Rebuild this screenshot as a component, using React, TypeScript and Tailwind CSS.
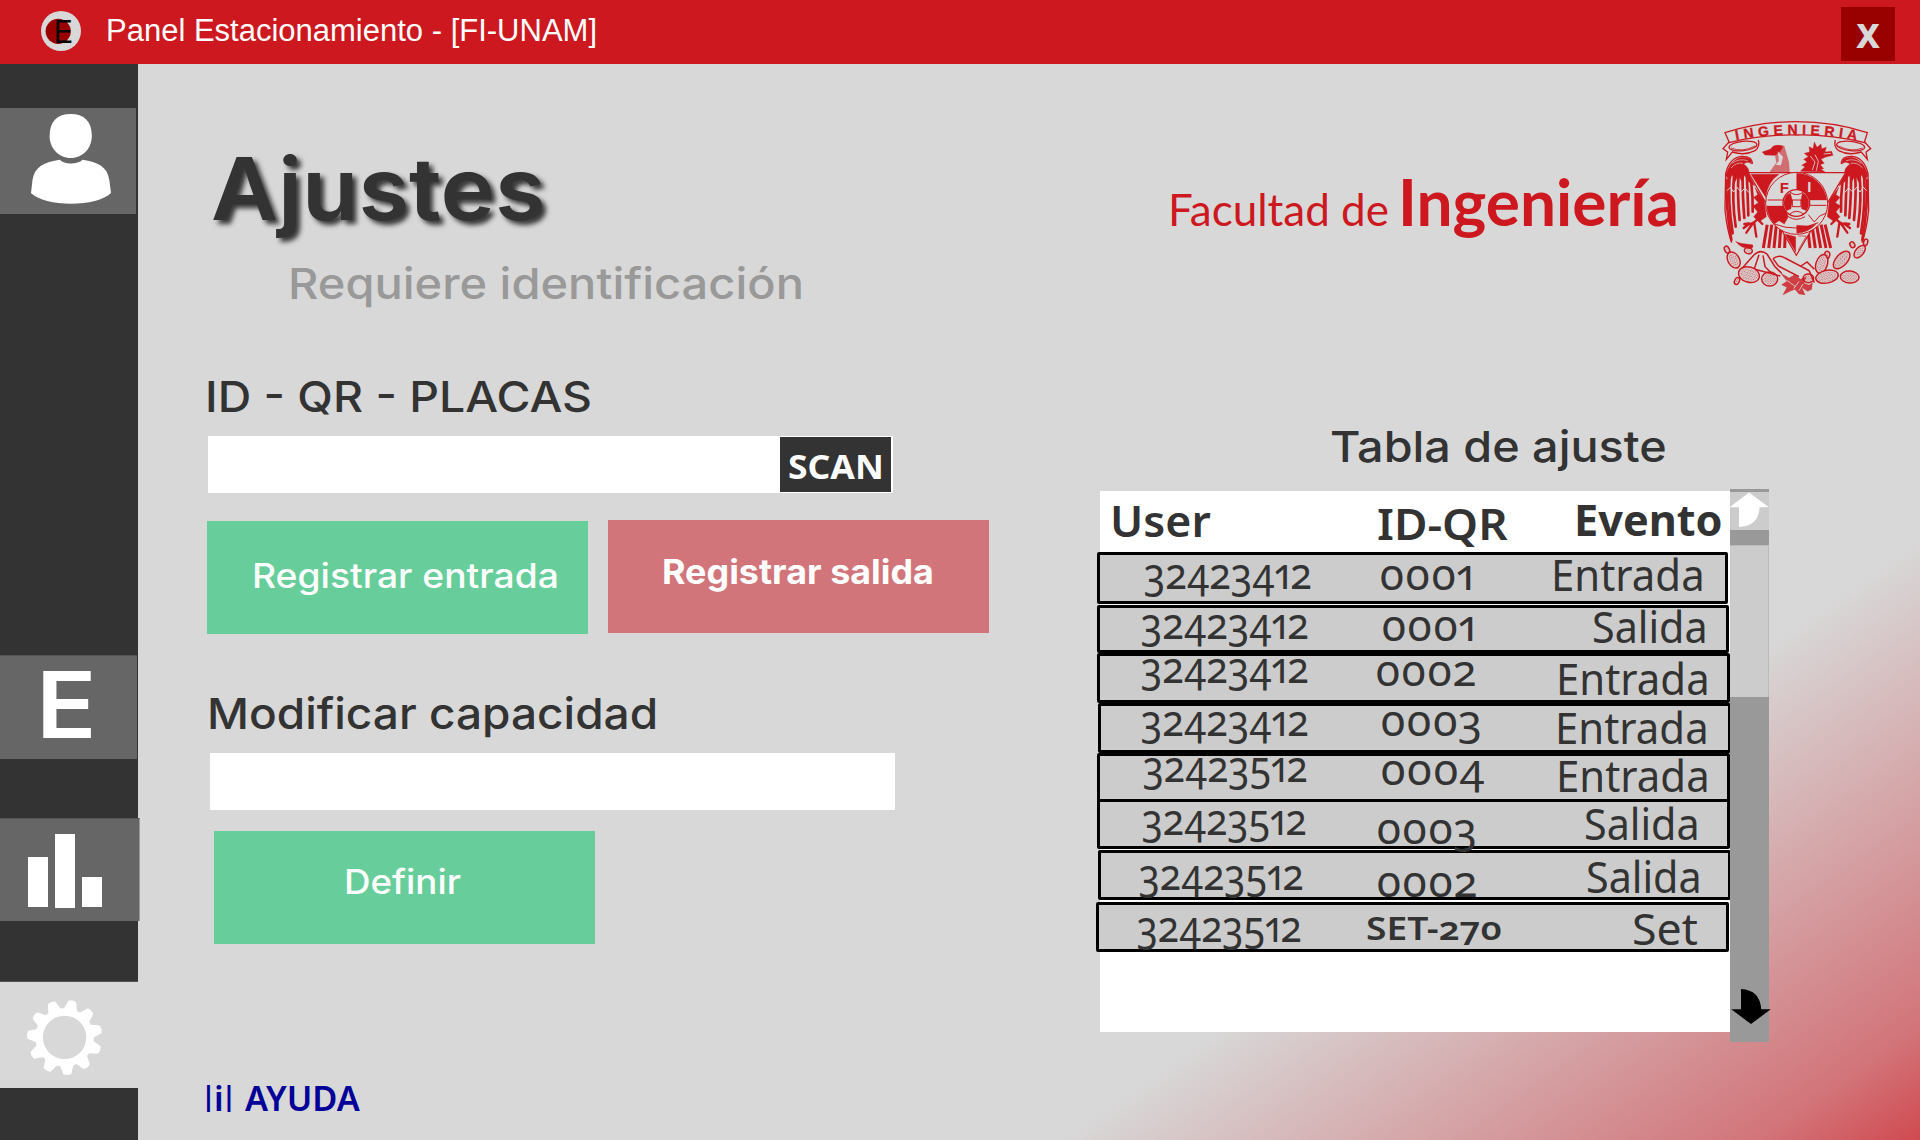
import React from 'react';

const noto = "font-['Noto_Sans',sans-serif]";
const inter = "font-['Inter',sans-serif]";

function T({ className = '', children }: { className?: string; children: React.ReactNode }) {
  return <span className={`block origin-left whitespace-nowrap leading-none ${className}`}>{children}</span>;
}

function gearPath(cx: number, cy: number) {
  const teeth = 11;
  const pts: string[] = [];
  const at = (r: number, deg: number) => {
    const a = (deg * Math.PI) / 180;
    return `${(cx + r * Math.cos(a)).toFixed(2)} ${(cy + r * Math.sin(a)).toFixed(2)}`;
  };
  for (let i = 0; i < teeth; i++) {
    const mid = 85.6 + (i * 360) / teeth;
    pts.push(at(29.2, mid - 13), at(37.2, mid - 6), at(37.8, mid), at(37.2, mid + 6), at(29.2, mid + 13));
  }
  return `M${pts.join('L')}Z M${cx + 21.7} ${cy} a21.7 21.7 0 1 0 -43.4 0 a21.7 21.7 0 1 0 43.4 0Z`;
}

function BrandMark() {
  return (
    <svg className="h-10 w-10 shrink-0" viewBox="41 11 40 40">
      <circle cx="61" cy="31" r="20" fill="#d8d8d8" />
      <circle cx="58.2" cy="31.3" r="12.6" fill="#990000" />
      <text x="54" y="43" fontSize="34" textLength="18.5" lengthAdjust="spacingAndGlyphs" fontFamily="Liberation Sans" fill="#000">E</text>
    </svg>
  );
}

function UserIcon() {
  return (
    <svg className="block h-[106px] w-[136px]" viewBox="0 108 136 106" fill="#fff">
      <path d="M70.7 114C84 114 91.8 121 91.8 136C91.8 148 83 158 70.7 158C58.5 158 49.6 148 49.6 136C49.6 121 57.5 114 70.7 114Z" />
      <path d="M60 159.8C64 164.8 78 164.8 82.5 159.8C98 162 107.5 167 109.3 180L111 193C104 200 88 203.7 71 203.7C54 203.7 38 200 31 193L32.5 180C34.5 167 44 162 60 159.8Z" />
    </svg>
  );
}

const wingFeathers = [
  'M83 240Q80 320 97 420', 'M92 220Q86 310 101 400', 'M106 216Q98 300 110 380', 'M119 218Q114 284 122 360',
  'M131 222Q130 280 136 354', 'M144 232Q146 290 148 346', 'M157 250Q162 290 161 335',
];

function WingSide() {
  return (
    <g>
      <path d="M160 192Q160 168 128 169Q92 172 80 220L78 330Q84 390 98 428" fill="none" strokeWidth="4" />
      <path d="M80 226Q94 178 128 172Q160 170 158 192Q148 182 134 192Q152 204 150 222L168 258L150 246L136 226L128 244L118 226L108 246L100 224L90 244Z" />
      {wingFeathers.map((d) => <path key={d} d={d} fill="none" strokeWidth="8" strokeLinecap="round" />)}
      <path d="M100 190Q120 174 146 182M96 204Q112 186 132 190" fill="none" stroke="#d8d8d8" strokeWidth="2" />
      <path d="M84 272L94 262L104 276L114 262L126 276L138 264L150 278" fill="none" stroke="#d8d8d8" strokeWidth="3" />
      <path d="M168 262L196 300L202 350L180 366L164 350L176 336L162 318L178 308L164 292L176 284Z" />
      <path d="M176 356Q165 372 150 372L134 384M160 372L142 398M166 370L172 410M150 370L136 372M178 360L190 372" fill="none" strokeWidth="7" strokeLinecap="round" />
      <path d="M90 126L72 146L86 156L82 178L100 156Q138 168 168 152Q184 140 178 120" fill="none" strokeWidth="4" />
      <ellipse cx="132" cy="138" rx="42" ry="14" fill="none" strokeWidth="4" transform="rotate(-6 132 138)" />
      <path d="M96 144Q130 158 168 138" fill="none" strokeWidth="2.5" />
    </g>
  );
}

const cactusPads = [
  [84, 449, 7, 11, -25], [104, 480, 17, 26, -30], [148, 452, 12, 9, 10], [150, 524, 32, 23, 15], [114, 543, 7, 11, 25],
  [212, 537, 24, 21, 0], [384, 465, 8, 11, 15], [368, 492, 17, 29, 18], [428, 480, 17, 32, 42], [482, 455, 12, 22, 40],
  [500, 427, 6, 10, 15], [460, 434, 7, 9, -30], [384, 530, 34, 19, -12], [452, 531, 28, 18, 4], [328, 535, 16, 13, 0],
];

const tailStripes = [190, 206, 222, 238, 254, 330, 346, 362, 378, 392];

function Crest() {
  return (
    <svg className="block h-[185px] w-[155px] shrink-0" viewBox="60 45 465 555" fill="#cc181e" stroke="#cc181e" strokeWidth="1">
      <defs>
        <path id="banner-line" d="M111 121Q290 86 476 121" />
        <pattern id="spines" width="8" height="8" patternUnits="userSpaceOnUse">
          <circle cx="2" cy="2" r="1.6" stroke="none" />
          <circle cx="6" cy="6" r="1.6" stroke="none" />
        </pattern>
      </defs>
      <path d="M92 130L78 98Q180 65 292 65Q405 65 505 98L495 130M90 128Q190 103 292 105Q395 103 497 128" fill="none" strokeWidth="4" />
      <text fontSize="42" fontWeight="700" fontFamily="Liberation Sans" strokeWidth="1">
        <textPath href="#banner-line" textLength="364">INGENIERIA</textPath>
      </text>
      <WingSide />
      <g transform="translate(587 0) scale(-1 1)"><WingSide /></g>

      <path d="M190 156L214 148L222 138Q240 132 256 138L270 186L272 216H212Q222 200 232 188L228 166L198 165Z" fillOpacity="0.55" stroke="none" />
      <path d="M190 156L214 148L224 138Q240 133 252 140L244 154L228 166L198 165Z" />
      <path d="M236 154L240 182L230 194L246 196L252 170Z" fill="#d8d8d8" stroke="none" />
      <path d="M304 214L318 200L308 196L324 186L314 178L328 170L316 160L332 156L330 140L342 146L346 126L354 142L366 132L368 146L382 142L378 156L398 154L402 166L378 172L366 178L376 190L364 194L374 206L366 208L378 216Z" />
      <path d="M334 168L348 186L340 210M348 164L358 184L352 212M374 162L396 160" stroke="#d8d8d8" strokeWidth="2.5" fill="none" />

      {tailStripes.map((x) => <path key={x} d={`M${x + (294 - x) * 0.14} 374L${x + 3} 444`} fill="none" strokeWidth="9" />)}
      <path d="M148 218H440L292 466Z" fill="#d8d8d8" strokeWidth="3.5" />
      <path d="M156 223H240Q206 246 200 292Z" />
      <path d="M258 402L290 410V456Z" />
      <path d="M298 408H322L298 450" fill="none" strokeWidth="2" />
      <circle cx="293" cy="310" r="93" fill="#d8d8d8" strokeWidth="3" />
      <path d="M293 220A90 90 0 0 1 383 300H330L293 270Z" />
      <path d="M203 318H256L268 350L256 372L240 362L226 372A90 90 0 0 1 203 318Z" />
      <path d="M293 376L330 378L352 372A90 90 0 0 1 293 400Z" />
      <path d="M226 372Q290 398 358 368M206 300H254M332 316H382M328 344L346 366L362 348L380 340" fill="none" strokeWidth="3" />
      <circle cx="292" cy="309" r="40" fill="#d8d8d8" strokeWidth="4" />
      <path d="M256 300Q262 280 274 280L280 300L276 326L262 332Q252 318 256 300ZM328 300Q322 280 310 280L306 300L308 326L322 332Q332 318 328 300Z" />
      <path d="M272 276Q292 292 314 276M272 342Q292 326 314 342M280 300H306V320H280ZM268 350Q292 366 318 350" fill="none" strokeWidth="3" />
      <text x="242" y="278" fontSize="45" fontWeight="700" fontFamily="Liberation Sans" stroke="none">F</text>
      <text x="325" y="277" fontSize="45" fontWeight="700" fontFamily="Liberation Sans" stroke="none" fill="#d8d8d8">I</text>

      {cactusPads.map(([cx, cy, rx, ry, r]) => (
        <g key={`${cx}-${cy}`} transform={`rotate(${r} ${cx} ${cy})`}>
          <ellipse cx={cx} cy={cy} rx={rx} ry={ry} fill="#d8d8d8" strokeWidth="4.5" />
          <ellipse cx={cx} cy={cy} rx={rx - 4} ry={ry - 4} fill="url(#spines)" stroke="none" />
        </g>
      ))}
      <path d="M110 424Q122 432 160 434Q166 440 156 446Q124 446 110 424Z" />
      <path d="M132 502L164 466Q184 446 204 462L228 500L248 520M180 464L166 506M192 466L198 500L220 522M222 476Q240 462 258 474L330 512L346 548M222 476L238 498L300 530M306 498L324 486L346 508M168 508L244 528" fill="none" strokeWidth="4.5" />
      <path d="M246 520L270 534L288 524L304 538L322 530L314 550L330 556L340 548L338 568L326 574L308 562L318 584L300 582L288 568L276 572L252 584L264 562L248 554L264 544Z" fillOpacity="0.8" />
      <path d="M262 540L290 560M300 544L284 566M312 552L300 572" stroke="#d8d8d8" strokeWidth="2.5" fill="none" />
    </svg>
  );
}

type Cell = { text: string; at: string };
type Row = { box: string; user: Cell; id: Cell; event: Cell };

const rows: Row[] = [
  { box: 'w-[631px] h-[52px]', user: { text: '32423412', at: 'ml-[44px] -mt-[5px] scale-x-[0.9]' }, id: { text: '0001', at: 'ml-[9px] -mt-[4px] scale-x-[1]' }, event: { text: 'Entrada', at: 'ml-[31px] -mt-[2px] scale-x-[0.975]' } },
  { box: 'w-[632px] h-[48px] mt-px', user: { text: '32423412', at: 'ml-[41px] -mt-[8px] scale-x-[0.9]' }, id: { text: '0001', at: 'ml-[11px] -mt-[6px] scale-x-[1]' }, event: { text: 'Salida', at: 'ml-[72px] -mt-[3px] scale-x-[0.96]' } },
  { box: 'w-[633px] h-[50px]', user: { text: '32423412', at: 'ml-[41px] -mt-[12px] scale-x-[0.9]' }, id: { text: '0002', at: 'ml-[5px] -mt-[9px] scale-x-[1]' }, event: { text: 'Entrada', at: 'ml-[36px] mt-px scale-x-[0.975]' } },
  { box: 'w-[633px] h-[50px] ml-px', user: { text: '32423412', at: 'ml-[40px] -mt-[9px] scale-x-[0.9]' }, id: { text: '0003', at: 'ml-[9px] -mt-[9px] scale-x-[1.01]' }, event: { text: 'Entrada', at: 'ml-[34px] mt-0 scale-x-[0.975]' } },
  { box: 'w-[633px] h-[49px]', user: { text: '32423512', at: 'ml-[43px] -mt-[13px] scale-x-[0.885]' }, id: { text: '0004', at: 'ml-[10px] -mt-[10px] scale-x-[1.02]' }, event: { text: 'Entrada', at: 'ml-[36px] -mt-[2px] scale-x-[0.975]' } },
  { box: 'w-[633px] h-[50px] -mt-[3px]', user: { text: '32423512', at: 'ml-[42px] -mt-[6px] scale-x-[0.885]' }, id: { text: '0003', at: 'ml-[6px] mt-[3px] scale-x-[1]' }, event: { text: 'Salida', at: 'ml-[64px] mt-0 scale-x-[0.96]' } },
  { box: 'w-[633px] h-[50px] mt-px ml-px', user: { text: '32423512', at: 'ml-[38px] -mt-[2px] scale-x-[0.885]' }, id: { text: '0002', at: 'ml-[5px] mt-[5px] scale-x-[1]' }, event: { text: 'Salida', at: 'ml-[65px] mt-[2px] scale-x-[0.96]' } },
  { box: 'w-[633px] h-[50px] mt-[2px] -ml-px', user: { text: '32423512', at: 'ml-[38px] -mt-[2px] scale-x-[0.885]' }, id: { text: 'SET-270', at: '-ml-[3px] mt-[7px]' }, event: { text: 'Set', at: 'ml-[113px] mt-[2px] scale-x-[1.04]' } },
];

function Table() {
  return (
    <div className={`ml-[1px] mt-[2px] h-[541px] w-[630px] bg-white text-[#333] ${noto}`}>
      <div className="grid h-[61px] grid-cols-[270px_194px_1fr] text-[43px] font-semibold">
        <T className="ml-[10px] mt-[8px] scale-x-[1.037]">User</T>
        <T className="ml-[7px] mt-[11px] scale-x-[1.065]">ID-QR</T>
        <T className="ml-[10px] mt-[7px] scale-x-[1.005] font-bold">Evento</T>
      </div>
      <div className="-ml-[3px] flex flex-col items-start">
        {rows.map((r, i) => (
          <div key={i} className={`grid shrink-0 grid-cols-[270px_150px_1fr] items-start rounded-[2px] border-[3px] border-black bg-[#ccc] ${r.box}`}>
            <T className={`text-[44px] [font-feature-settings:'onum','pnum'] ${r.user.at}`}>{r.user.text}</T>
            {r.id.text.startsWith('SET')
              ? <T className={`scale-x-[1.16] text-[32px] font-semibold [font-feature-settings:'onum','pnum'] ${r.id.at}`}>{r.id.text}</T>
              : <T className={`text-[44px] [font-feature-settings:'onum','pnum'] ${r.id.at}`}>{r.id.text}</T>}
            <T className={`text-[43px] ${r.event.at}`}>{r.event.text}</T>
          </div>
        ))}
      </div>
    </div>
  );
}

function Scrollbar() {
  return (
    <div className="flex h-[553px] w-[39px] flex-col bg-[#999]">
      <div className="mt-[3px] h-[38px] bg-[#ccc]">
        <svg className="block h-[38px] w-[39px] overflow-visible" viewBox="1730 492 39 38" fill="#fff">
          <path d="M1749 492.5L1769 507.3H1759.6Q1759 526 1739 527V507.3H1729.5Z" />
          <path d="M1728.5 492.5H1730V530H1728.5Z" />
        </svg>
      </div>
      <div className="mt-[15px] h-[152px] border-r border-t border-[#bbb] bg-[#ccc]" />
      <svg className="mt-[292px] block h-[36px] w-[39px] overflow-visible" viewBox="1730 989 39 36">
        <path d="M1741 989Q1760 990 1761.2 1009.3H1770.8L1751 1024L1731.2 1009.3H1741Z" />
      </svg>
    </div>
  );
}

function Sidebar() {
  return (
    <nav className="z-10 flex w-[138px] shrink-0 flex-col items-start bg-[#333]">
      <div className="mt-[44px] h-[106px] w-[136px] bg-[#666]"><UserIcon /></div>
      <div className="mt-[441px] h-[104px] w-[137px] border-t border-[#555] bg-[#666]">
        <T className={`ml-[36px] mt-[3px] scale-x-[1.089] text-[92px] font-semibold text-white ${inter}`}>E</T>
      </div>
      <div className="mt-[59px] h-[103px] w-[140px] border-r border-t border-t-[#555] border-r-[#999] bg-[#666]">
        <div className="ml-[28px] flex h-[89px] items-end gap-[7px]">
          <div className="mb-px h-[50px] w-[20px] bg-white" />
          <div className="h-[74px] w-[20px] bg-white" />
          <div className="mb-px h-[30px] w-[20px] bg-white" />
        </div>
      </div>
      <div className="mt-[60px] h-[107px] w-[138px] border-t border-[#555] bg-[#d8d8d8]">
        <svg className="block h-[106px] w-[138px]" viewBox="0 982 138 106">
          <path d={gearPath(64.6, 1037.4)} fill="#fff" fillRule="evenodd" />
        </svg>
      </div>
    </nav>
  );
}

function Controls() {
  return (
    <section className="flex w-[956px] shrink-0 flex-col items-start pl-[65px]">
      <T className={`ml-[8px] mt-[81px] scale-x-[1.058] text-[87px] font-semibold text-[#333] [text-shadow:4px_4px_5px_rgba(0,0,0,0.75)] ${inter}`}>Ajustes</T>
      <T className={`ml-[85px] mt-[30px] scale-x-[1.093] text-[43px] font-medium text-[#999] ${inter}`}>Requiere identificación</T>
      <T className={`ml-[2px] mt-[70px] scale-x-[1.079] text-[43px] font-medium text-[#333] ${inter}`}>ID - QR - PLACAS</T>
      <div className="ml-[5px] mt-[18px] flex h-[57px] w-[685px] justify-end bg-white pr-[2px] pt-px">
        <button className="flex h-[55px] w-[111px] items-start bg-[#333]">
          <T className={`ml-[8px] mt-[12px] scale-x-[1.044] text-[34px] font-bold text-white ${noto}`}>SCAN</T>
        </button>
      </div>
      <div className="ml-[4px] mt-[27px] flex gap-[20px]">
        <button className="mt-px flex h-[113px] w-[381px] items-start bg-[#67ce9b]">
          <T className={`ml-[45px] mt-[38px] scale-x-[1.095] text-[34px] font-medium text-white ${inter}`}>Registrar entrada</T>
        </button>
        <button className="flex h-[113px] w-[381px] items-start bg-[#d2757a]">
          <T className={`ml-[54px] mt-[35px] scale-x-[1.055] text-[34px] font-bold text-white ${inter}`}>Registrar salida</T>
        </button>
      </div>
      <T className={`ml-[4px] mt-[58px] scale-x-[1.069] text-[43px] font-medium text-[#333] ${inter}`}>Modificar capacidad</T>
      <div className="ml-[7px] mt-[18px] h-[57px] w-[685px] bg-white" />
      <button className="ml-[11px] mt-[21px] flex h-[113px] w-[381px] items-start bg-[#67ce9b]">
        <T className={`ml-[130px] mt-[34px] scale-x-[1.08] text-[34px] font-medium text-white ${inter}`}>Definir</T>
      </button>
      <div className={`mt-[137px] flex text-[#000099] ${noto}`}>
        <T className="-ml-[2px] mt-px text-[27px] font-bold">|</T>
        <T className="-ml-[2px] text-[34px] font-semibold">i</T>
        <T className="-ml-[2px] mt-px text-[27px] font-bold">|</T>
        <T className="ml-[9px] scale-x-[1.01] text-[34px] font-semibold">AYUDA</T>
      </div>
    </section>
  );
}

export default function App() {
  return (
    <div className="flex h-[1140px] w-[1920px] flex-col overflow-hidden">
      <header className="flex h-[64px] shrink-0 items-start bg-[#cc181e]">
        <div className="ml-[41px] mt-[11px]"><BrandMark /></div>
        <T className="ml-[25px] mt-[15px] font-['Liberation_Sans',sans-serif] text-[31px] text-white">Panel Estacionamiento - [FI-UNAM]</T>
        <button className={`ml-auto mr-[25px] mt-[7px] flex h-[54px] w-[54px] items-start justify-center bg-[#990000] pt-[11px] text-[34px] font-extrabold leading-none text-[#d8d8d8] ${noto}`}>X</button>
      </header>
      <div className="flex min-h-0 flex-1 bg-[#d8d8d8]">
        <Sidebar />
        <main className="flex min-w-0 flex-1 bg-[linear-gradient(145deg,#d8d8d8_0%,#d8d8d8_74%,#d2757a_95%,#d04a50_100%)]">
          <Controls />
          <section className="flex flex-col items-start">
            <div className="ml-[74px] mt-[51px] flex items-start font-['Lato',sans-serif] text-[#cc181e]">
              <div className="mt-[54px] flex w-[551px] items-baseline">
                <T className="w-[230px] text-[44px]">Facultad de</T>
                <T className="scale-x-[0.984] text-[65px] font-bold">Ingeniería</T>
              </div>
              <Crest />
            </div>
            <T className={`ml-[236px] mt-[125px] scale-x-[1.087] text-[43px] font-medium text-[#333] ${inter}`}>Tabla de ajuste</T>
            <div className="ml-[5px] mt-[21px] flex items-start">
              <Table />
              <Scrollbar />
            </div>
          </section>
        </main>
      </div>
    </div>
  );
}
